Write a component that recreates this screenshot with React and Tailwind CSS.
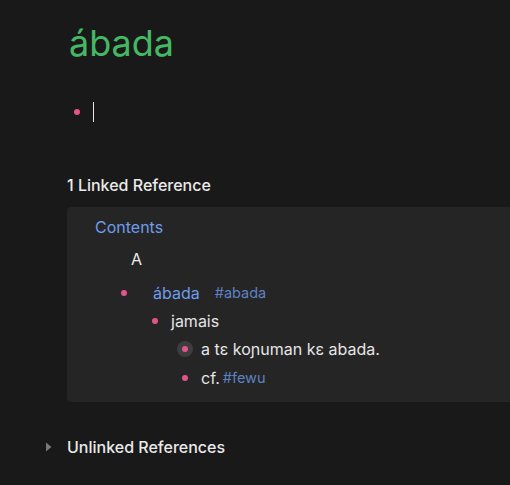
import React from 'react';

const Bullet = ({ ring = false }) => (
    <span className="w-4 h-4 flex items-center justify-center shrink-0">
        <span className={`w-4 h-4 rounded-full flex items-center justify-center ${ring ? 'bg-[#3d3d3d]' : ''}`}>
            <span className="w-[6px] h-[6px] rounded-full bg-[#e4548c]" />
        </span>
    </span>
);

export default function App() {
    return (
        <div className="w-[510px] h-[485px] overflow-hidden bg-[#191919] text-[#e6e6e6] font-['Inter',sans-serif]">
            {/* Page title */}
            <h1 className="pl-[69px] pt-[19px] text-[36px] leading-[48px] text-[#45b864]">ábada</h1>

            {/* Empty block with cursor */}
            <div className="flex items-center pl-[69px] mt-[33px] h-[24px]">
                <Bullet />
                <span className="ml-[8px] w-px h-[20px] bg-[#e6e6e6]" />
            </div>

            {/* Linked references */}
            <div className="pl-[67px] mt-[51px] text-[16px] font-medium leading-[20px] text-[#eaeaea]">1 Linked Reference</div>

            <div className="ml-[67px] mt-[12px] w-[460px] h-[195px] rounded-[4px] bg-[#252525] pt-[9px]">
                <div className="pl-[28px] text-[16px] leading-[22px] text-[#6f9ceb]">Contents</div>
                <div className="pl-[64px] mt-[10px] text-[16px] leading-[22px] text-[#eaeaea]">A</div>

                <div className="flex items-center pl-[49px] mt-[11px] h-[24px] text-[16px]">
                    <Bullet />
                    <span className="ml-[21px] text-[#6f9ceb]">ábada</span>
                    <span className="ml-[15px] text-[14.5px] text-[#5d82c4]">#abada</span>
                </div>

                <div className="flex items-center pl-[80px] mt-[4px] h-[24px] text-[16px]">
                    <Bullet />
                    <span className="ml-[8px]">jamais</span>
                </div>

                <div className="flex items-center pl-[110px] mt-[4px] h-[24px] text-[16px]">
                    <Bullet ring />
                    <span className="ml-[8px]">a tɛ koɲuman kɛ abada.</span>
                </div>

                <div className="flex items-center pl-[110px] mt-[5px] h-[24px] text-[16px]">
                    <Bullet />
                    <span className="ml-[8px]">cf.</span>
                    <span className="ml-[3px] text-[14.5px] text-[#5d82c4]">#fewu</span>
                </div>
            </div>

            {/* Unlinked references */}
            <div className="flex items-center mt-[33px] pl-[45px] h-[24px]">
                <svg width="8" height="10" viewBox="0 0 8 10" className="shrink-0">
                    <path d="M1 0.5 L6.5 5 L1 9.5 Z" fill="#7a7a7a" />
                </svg>
                <span className="ml-[14px] text-[16px] font-medium text-[#eaeaea]">Unlinked References</span>
            </div>
        </div>
    );
}
